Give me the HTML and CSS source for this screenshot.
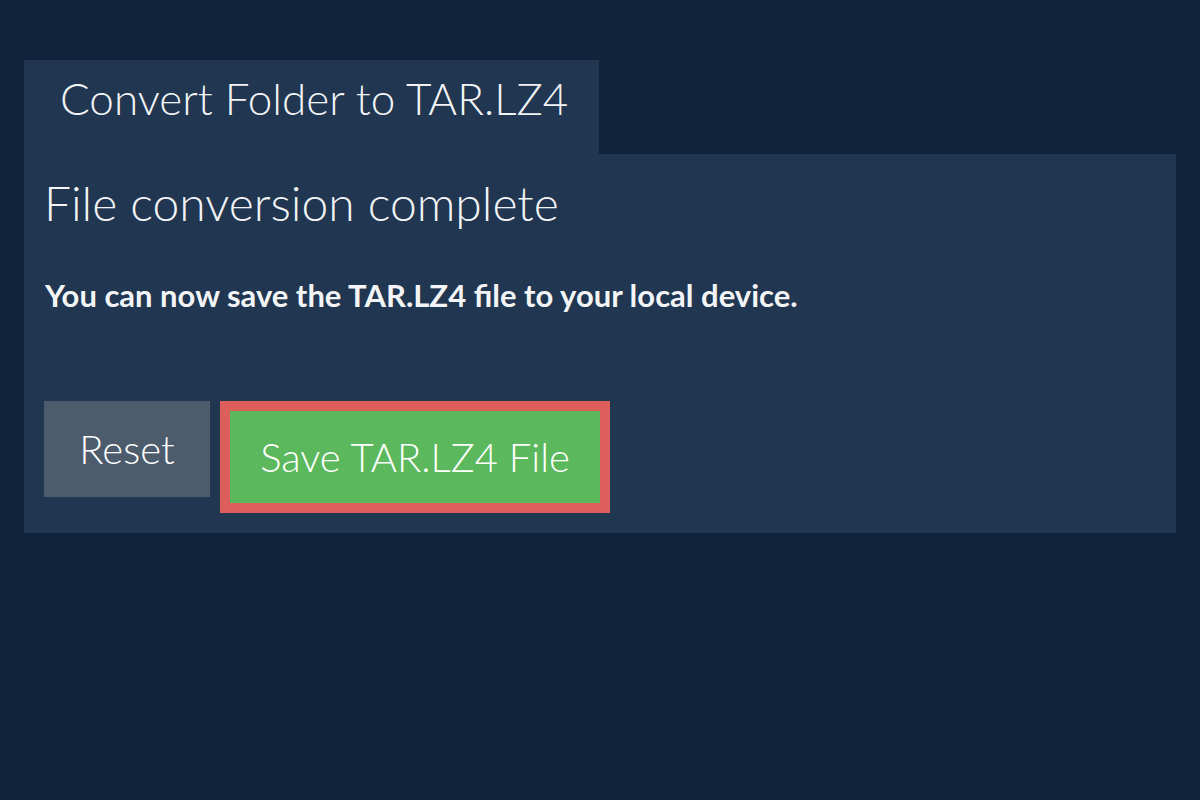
FILE: index.html
```html
<!DOCTYPE html>
<html>
<head>
<meta charset="utf-8">
<link rel="stylesheet" href="styles.css">
</head>
<body>
<div class="wrap">
  <div class="tab">Convert Folder to TAR.LZ4</div>
  <div class="panel">
    <h2 class="title">File conversion complete</h2>
    <p class="msg">You can now save the TAR.LZ4 file to your local device.</p>
    <div class="actions">
      <button class="btn reset">Reset</button>
      <button class="btn save">Save TAR.LZ4 File</button>
    </div>
  </div>
</div>
</body>
</html>
```
FILE: styles.css
```css
html, body {
  margin: 0;
  padding: 0;
  background: #10233a;
  font-family: Lato, "Open Sans", sans-serif;
  color: #f2f4f6;
}
.wrap {
  padding: 60px 24px 0 24px;
}
.tab {
  display: inline-block;
  background: #213650;
  height: 94px;
  line-height: 77px;
  padding: 0 31px 0 36px;
  font-size: 44px;
  font-weight: 300;
}
.panel {
  background: #213650;
  padding: 20px 20px 20px 20px;
}
.title {
  margin: 0;
  font-weight: 300;
  font-size: 48px;
  line-height: 1.2;
}
.msg {
  margin: 45px 0 0 1px;
  font-weight: 700;
  font-size: 31px;
  line-height: 1.2;
}
.actions {
  display: flex;
  align-items: flex-start;
  margin-top: 87px;
  gap: 10px;
}
.btn {
  font-family: inherit;
  color: #ffffff;
  font-size: 40px;
  font-weight: 300;
  border: 0;
  margin: 0;
  padding: 0;
  cursor: pointer;
}
.reset {
  background: #4c5c6d;
  width: 166px;
  height: 96px;
}
.save {
  background: #5cb85c;
  width: 390px;
  height: 112px;
  border: 10px solid #dc5f5c;
}
```
